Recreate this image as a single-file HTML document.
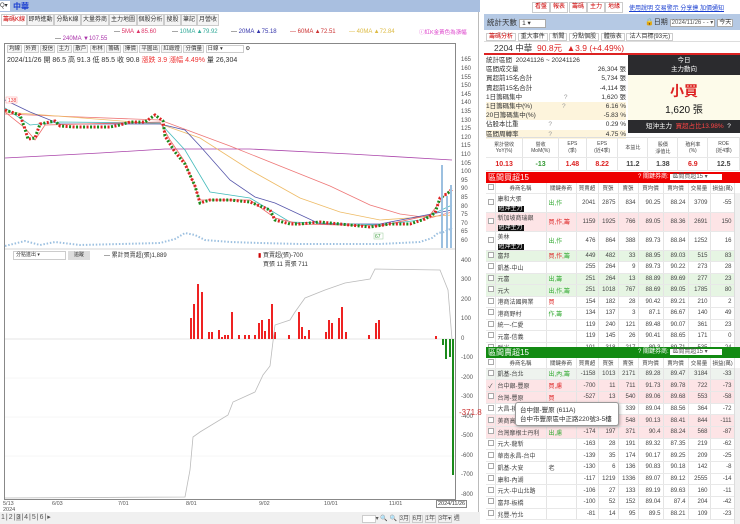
<!DOCTYPE html>
<html><head><meta charset="utf-8">
<style>
*{margin:0;padding:0;box-sizing:border-box}
body{width:740px;height:524px;overflow:hidden;background:#fff;font-family:"Liberation Sans","Noto Sans CJK TC",sans-serif;font-size:7px;color:#333;position:relative}
.a{position:absolute}
.tab{position:absolute;top:14px;height:12px;border:1px solid #ccc;background:#f4f4f4;font-size:6px;line-height:10px;text-align:center;color:#333;overflow:hidden;white-space:nowrap}
.btn{position:absolute;top:2px;height:11px;border:1px solid #ccc;background:#fff;color:#c00;font-size:6px;line-height:9px;padding:0 2px}
.ax{position:absolute;left:461px;font-size:6px;color:#555}
table{border-collapse:collapse;font-size:6px}
td{border-right:1px solid #e4e4e4;border-bottom:1px solid #e8e8e8;padding:0 2px;text-align:right;white-space:nowrap;overflow:hidden;color:#444}
td.n{text-align:left}
td.c{text-align:center}
.bl{background:#111;color:#fff;padding:0 1px;font-size:6px}
.pk{background:#fde4e6}.gr{background:#e6f5e3}.gy{background:#eef3ee}
.cb{display:inline-block;width:6px;height:6px;border:1px solid #aaa;background:#fff}
.tb{border:1px solid #ccc;background:#f5f5f5;padding:0 1px}
</style></head><body>
<div class="a" style="left:0;top:0;width:480px;height:12px;background:#a9bfe0"></div>
<div class="a" style="left:0;top:1px;width:10px;height:10px;background:#fff;font-size:6px;line-height:10px">Q▾</div>
<div class="a" style="left:13px;top:1px;color:#1a3fd0;font-size:8px;font-weight:bold">中華</div>
<div class="tab" style="left:1px;width:26px;color:#c00;background:#fff">籌碼K線</div>
<div class="tab" style="left:27px;width:27px">即時進動</div>
<div class="tab" style="left:54px;width:27px">分點K線</div>
<div class="tab" style="left:81px;width:28px">大量券商</div>
<div class="tab" style="left:109px;width:28px">主力地圖</div>
<div class="tab" style="left:137px;width:27px">個股分析</div>
<div class="tab" style="left:164px;width:17px">搜股</div>
<div class="tab" style="left:181px;width:16px">筆記</div>
<div class="tab" style="left:197px;width:22px">月營收</div>
<div class="a" style="top:29px;left:114px;font-size:6px;white-space:nowrap">— <span style="color:#d36">5MA ▲85.60</span></div>
<div class="a" style="top:29px;left:172px;font-size:6px;white-space:nowrap">— <span style="color:#3a9">10MA ▲79.92</span></div>
<div class="a" style="top:29px;left:231px;font-size:6px;white-space:nowrap">— <span style="color:#33a">20MA ▲75.18</span></div>
<div class="a" style="top:29px;left:290px;font-size:6px;white-space:nowrap"><span style="color:#c33">— 60MA ▲72.51</span></div>
<div class="a" style="top:29px;left:349px;font-size:6px;white-space:nowrap"><span style="color:#db4">— 40MA ▲72.84</span></div>
<div class="a" style="top:28px;left:419px;font-size:5.5px;color:#d4c;white-space:nowrap">ⓘ紅K金黃色為漲幅</div>
<div class="a" style="top:36px;left:55px;font-size:6px;white-space:nowrap">— <span style="color:#a3a">240MA ▼107.55</span></div>
<div class="a" style="left:4px;top:43px;width:452px;height:457px;border:1px solid #888"></div>
<div class="a" style="left:478px;top:12px;width:1px;height:500px;background:#bbb"></div>
<div class="a" style="left:7px;top:44px;font-size:5.5px;white-space:nowrap">
<span class="tb">均線</span> <span class="tb">外資</span> <span class="tb">投信</span> <span class="tb">主力</span> <span class="tb">散戶</span> <span class="tb">布林</span> <span class="tb">籌碼</span> <span class="tb">擇價</span> <span class="tb">平圖出</span> <span class="tb">紅綠燈</span> <span class="tb">分價量</span> <span style="border:1px solid #ccc;padding:0 20px 0 1px">日線 ▾</span> ⚙</div>
<div class="a" style="left:7px;top:55px;font-size:7px;color:#333;white-space:nowrap">2024/11/26 開 86.5 高 91.3 低 85.5 收 90.8 <span style="color:#e33">漲跌 3.9 漲幅 4.49%</span> 量 26,304</div>
<div class="ax" style="top:57px">165</div><div class="ax" style="top:66px">160</div><div class="ax" style="top:75px">155</div><div class="ax" style="top:83px">150</div><div class="ax" style="top:92px">145</div><div class="ax" style="top:100px">140</div><div class="ax" style="top:109px">135</div><div class="ax" style="top:118px">130</div><div class="ax" style="top:126px">125</div><div class="ax" style="top:135px">120</div><div class="ax" style="top:143px">115</div><div class="ax" style="top:152px">110</div><div class="ax" style="top:161px">105</div><div class="ax" style="top:169px">100</div><div class="ax" style="top:178px">95</div><div class="ax" style="top:186px">90</div><div class="ax" style="top:195px">85</div><div class="ax" style="top:204px">80</div><div class="ax" style="top:212px">75</div><div class="ax" style="top:221px">70</div><div class="ax" style="top:229px">65</div><div class="ax" style="top:238px">60</div>
<div class="ax" style="top:258px">400</div><div class="ax" style="top:277px">300</div><div class="ax" style="top:297px">200</div><div class="ax" style="top:316px">100</div><div class="ax" style="top:336px">0</div><div class="ax" style="top:355px">-100</div><div class="ax" style="top:375px">-200</div><div class="ax" style="top:394px">-300</div><div class="ax" style="top:414px">-400</div><div class="ax" style="top:433px">-500</div><div class="ax" style="top:453px">-600</div><div class="ax" style="top:472px">-700</div><div class="ax" style="top:492px">-800</div>
<div class="a" style="left:459px;top:408px;color:#c33;font-size:8px">-371.8</div>
<svg class="a" style="left:0;top:0" width="480" height="512">
<g fill="none" stroke-width="0.8">
<polyline stroke="#a4a" points="5,158 100,153 165,149 250,149 350,154 452,160"/>
<polyline stroke="#e77" points="5,114 80,117 160,120 230,146 280,166 330,186 370,205 400,214 430,218 452,212"/>
<polyline stroke="#eb6" points="5,112 160,124 200,138 250,170 300,198 340,212 380,220 452,215"/>
<polyline stroke="#55a" points="5,100 30,112 60,124 160,124 185,130 200,146 230,180 255,197 275,203 320,224 380,224 452,210"/>
<polyline stroke="#4bb" points="5,108 30,125 60,122 160,123 185,150 210,192 250,198 290,222 380,225 420,220 452,205"/>
<polyline stroke="#e66" points="5,112 25,128 35,140 45,125 160,122 170,140 185,162 200,200 210,200 250,200 275,218 300,224 380,226 430,215 445,195 452,188"/>
</g>
<g fill="none" stroke-width="3">
<polyline stroke="#d22" stroke-dasharray="2 5" points="5,110 20,115 25,129 28,139 35,138 40,124 55,121 60,126 75,127 90,127 110,127 120,125 130,122 145,122 155,115 163,121 165,136 175,152 185,164 195,186 200,203 210,200 230,200 250,202 270,210 275,220 290,224 300,224 320,222 340,224 370,227 390,224 410,224 425,219 435,213 440,198 448,193 452,189"/>
<polyline stroke="#1a8a1a" stroke-dashoffset="3.5" stroke-dasharray="2 5" points="5,110 20,115 25,129 28,139 35,138 40,124 55,121 60,126 75,127 90,127 110,127 120,125 130,122 145,122 155,115 163,121 165,136 175,152 185,164 195,186 200,203 210,200 230,200 250,202 270,210 275,220 290,224 300,224 320,222 340,224 370,227 390,224 410,224 425,219 435,213 440,198 448,193 452,189"/>
<polyline stroke="#9cc0e0" stroke-width="2" stroke-dasharray="1.5 1.8" points="5,246 25,241 40,245 55,242 80,245 120,244 160,243 175,239 185,233 195,235 205,240 230,242 260,243 300,244 340,244 380,244 420,242 432,238 438,233 444,232 452,228"/>
</g>
<rect x="441" y="165" width="2" height="83" fill="#9cc0e0"/><rect x="446" y="196" width="2" height="52" fill="#9cc0e0"/><rect x="450" y="185" width="2" height="63" fill="#9cc0e0"/>
<rect x="6" y="97" width="11" height="6" fill="#fff" stroke="#f99" stroke-width=".5"/><text x="8" y="102" font-size="5" fill="#e33">138</text>
<rect x="374" y="233" width="9" height="6" fill="#fff" stroke="#9c9" stroke-width=".5"/><text x="375" y="238" font-size="5" fill="#393">67</text>
<line x1="5" y1="249" x2="455" y2="249" stroke="#aaa" stroke-width=".5"/>
<line x1="5" y1="339" x2="455" y2="339" stroke="#ccc" stroke-width=".5"/>
<g stroke="#eee" stroke-width=".5"><line x1="5" y1="417" x2="455" y2="417"/><line x1="5" y1="456" x2="455" y2="456"/><line x1="5" y1="378" x2="455" y2="378"/></g>
<g fill="#e22">
<rect x="190" y="318" width="2" height="21"/><rect x="193" y="304" width="2" height="35"/><rect x="197" y="284" width="2" height="55"/><rect x="201" y="292" width="2" height="47"/><rect x="208" y="332" width="2" height="7"/><rect x="211" y="332" width="2" height="7"/><rect x="218" y="330" width="2" height="9"/><rect x="221" y="337" width="2" height="2"/><rect x="224" y="335" width="2" height="4"/><rect x="227" y="335" width="2" height="4"/><rect x="231" y="312" width="2" height="27"/><rect x="238" y="335" width="2" height="4"/><rect x="244" y="335" width="2" height="4"/><rect x="248" y="335" width="2" height="4"/><rect x="254" y="335" width="2" height="4"/><rect x="258" y="323" width="2" height="16"/><rect x="261" y="320" width="2" height="19"/><rect x="264" y="331" width="2" height="8"/><rect x="268" y="319" width="2" height="20"/><rect x="271" y="304" width="2" height="35"/><rect x="274" y="332" width="2" height="7"/><rect x="288" y="335" width="2" height="4"/><rect x="298" y="312" width="2" height="27"/><rect x="301" y="327" width="2" height="12"/><rect x="304" y="336" width="2" height="3"/><rect x="308" y="330" width="2" height="9"/><rect x="325" y="332" width="2" height="7"/><rect x="328" y="320" width="2" height="19"/><rect x="331" y="323" width="2" height="16"/><rect x="338" y="318" width="2" height="21"/><rect x="341" y="307" width="2" height="32"/><rect x="345" y="332" width="2" height="7"/><rect x="368" y="335" width="2" height="4"/><rect x="375" y="323" width="2" height="16"/><rect x="378" y="320" width="2" height="19"/><rect x="435" y="336" width="2" height="3"/></g>
<g fill="#1a8a1a"><rect x="442" y="339" width="2" height="6"/><rect x="445" y="339" width="2" height="20"/><rect x="449" y="339" width="2" height="18"/><rect x="452" y="339" width="2" height="136"/></g>
<polyline fill="none" stroke="#bbb" stroke-width=".8" points="5,498 185,497 190,470 193,437 200,432 228,415 233,402 255,392 263,375 270,366 275,325 290,320 295,312 305,298 325,290 345,283 370,279 375,269 440,270 448,290 452,339"/>
</svg>
<div class="a" style="left:13px;top:251px;width:53px;height:9px;border:1px solid #ccc;font-size:5px;line-height:7px;padding-left:2px">分點進出 ▾</div>
<div class="a" style="left:68px;top:251px;width:22px;height:9px;background:#ddd;font-size:5px;line-height:9px;text-align:center">追蹤</div>
<div class="a" style="left:104px;top:250px;font-size:6px;white-space:nowrap">— 累計買賣超(張)1,889</div>
<div class="a" style="left:258px;top:250px;font-size:6px;white-space:nowrap"><span style="color:#c00">▮</span> 買賣超(張)-700<br>&nbsp;&nbsp; 買張 11 賣張 711</div>
<div class="a" style="top:501px;left:3px;font-size:5.5px;color:#555;line-height:6px">5/13<br>2024</div>
<div class="a" style="top:501px;left:52px;font-size:5.5px;color:#555">6/03</div>
<div class="a" style="top:501px;left:118px;font-size:5.5px;color:#555">7/01</div>
<div class="a" style="top:501px;left:186px;font-size:5.5px;color:#555">8/01</div>
<div class="a" style="top:501px;left:259px;font-size:5.5px;color:#555">9/02</div>
<div class="a" style="top:501px;left:324px;font-size:5.5px;color:#555">10/01</div>
<div class="a" style="top:501px;left:389px;font-size:5.5px;color:#555">11/01</div>
<div class="a" style="top:500px;left:436px;font-size:5.5px;border:1px solid #888;padding:0 1px">2024/11/26</div>
<div class="a" style="left:0;top:512px;width:480px;height:12px;background:#f0f0f0"></div>
<div class="a" style="left:1px;top:513px;font-size:7px;color:#555;letter-spacing:1px">1|2|<span style="background:#ccc">3</span>|4|5|6|▸</div>
<div class="a" style="left:362px;top:513px;font-size:6px;color:#555;white-space:nowrap"><span style="border:1px solid #ccc;padding:0 5px;background:#fff">&nbsp;</span>▾ 🔍 🔍 <span style="border:1px solid #ccc">3月</span> <span style="border:1px solid #ccc">6月</span> <span style="border:1px solid #ccc">1年</span> <span style="border:1px solid #ccc">3年▾</span> 週</div>

<div class="btn" style="left:532px">看盤</div><div class="btn" style="left:550px">報表</div><div class="btn" style="left:569px">籌碼</div><div class="btn" style="left:587px">主力</div><div class="btn" style="left:605px">地緣</div>
<div class="a" style="left:629px;top:3px;font-size:6px;color:#1a3fd0;text-decoration:underline;white-space:nowrap">使用說明 交易警示 分享連 加價通知</div>
<div class="a" style="left:484px;top:14px;width:256px;height:16px;background:#b5c9e4"></div>
<div class="a" style="left:487px;top:17px;font-size:7.5px;white-space:nowrap">統計天數 <span style="background:#fff;border:1px solid #aaa;padding:0 14px 0 2px;font-size:6.5px">1 ▾</span></div>
<div class="a" style="left:645px;top:17px;font-size:7px;white-space:nowrap">🔒日期 <span style="background:#fff;border:1px solid #aaa;padding:0 1px;font-size:6px;color:#555">2024/11/26 ‑ ‑ ▾</span> <span style="background:#fff;border:1px solid #aaa;padding:0 1px;font-size:6px">今天</span></div>
<div class="a" style="left:486px;top:31px;font-size:6px;white-space:nowrap;color:#333"><span style="color:#c00;border:1px solid #ccc;padding:0 2px">籌碼分析</span> <span style="border:1px solid #ccc;padding:0 2px">重大事件</span> <span style="border:1px solid #ccc;padding:0 2px">新聞</span> <span style="border:1px solid #ccc;padding:0 2px">分點個股</span> <span style="border:1px solid #ccc;padding:0 2px">體檢表</span> <span style="border:1px solid #ccc;padding:0 2px">法人目標(93元)</span></div>
<div class="a" style="left:484px;top:41px;width:256px;height:14px;border-bottom:2px solid #d22;border-top:1px solid #ddd"></div>
<div class="a" style="left:494px;top:42px;font-size:8.5px;white-space:nowrap">2204 中華 &nbsp;<span style="color:#d22">90.8元 &nbsp;▲3.9 (+4.49%)</span></div>
<div class="a" style="left:486px;top:56px;width:140px;font-size:6.5px;line-height:9.2px">
<div>統計區間 &nbsp;20241126 ~ 20241126</div>
<div>區間成交量<span style="float:right">26,304 張</span></div>
<div>買超前15名合計<span style="float:right">5,734 張</span></div>
<div>賣超前15名合計<span style="float:right">-4,114 張</span></div>
<div>1日籌碼集中 <span style="margin-left:40px;color:#999">?</span><span style="float:right">1,620 張</span></div>
<div style="background:#fdf4dc">1日籌碼集中(%) <span style="margin-left:28px;color:#999">?</span><span style="float:right">6.16 %</span></div>
<div style="background:#fdf4dc">20日籌碼集中(%)<span style="float:right">-5.83 %</span></div>
<div>佔股本比重 <span style="margin-left:28px;color:#999">?</span><span style="float:right">0.29 %</span></div>
<div style="background:#fdf4dc">區間周轉率 <span style="margin-left:28px;color:#999">?</span><span style="float:right">4.75 %</span></div>
</div>
<div class="a" style="left:628px;top:55px;width:112px;height:20px;background:#2b2b2e;color:#fff;font-size:6.5px;text-align:center;line-height:9px;padding-top:1px">今日<br>主力動向</div>
<div class="a" style="left:628px;top:75px;width:112px;height:45px;background:#fdfbea;text-align:center"><div style="color:#d22;font-size:14px;font-weight:bold;margin-top:6px">小買</div><div style="font-size:10px;color:#111">1,620 張</div></div>
<div class="a" style="left:628px;top:120px;width:112px;height:13px;background:#2b2b2e;color:#fff;font-size:6.5px;line-height:13px;padding-left:18px;white-space:nowrap">短沖主力 &nbsp;<span style="color:#f44">買超占比13.98%</span> &nbsp;?</div>
<div class="a" style="left:486px;top:137px;width:254px;height:34px">
<table style="width:254px;height:34px;border-top:1px solid #ddd"><tr style="height:20px;color:#555"><td class="c" style="font-size:5px">累計營收<br>YoY(%)</td><td class="c" style="font-size:5px">營收<br>MoM(%)</td><td class="c" style="font-size:5px">EPS<br>(季)</td><td class="c" style="font-size:5px">EPS<br>(近4季)</td><td class="c" style="font-size:5px">本益比</td><td class="c" style="font-size:5px">股價<br>淨值比</td><td class="c" style="font-size:5px">殖利率<br>(%)</td><td class="c" style="font-size:5px">ROE<br>(近4季)</td></tr>
<tr style="font-size:7px;font-weight:bold"><td class="c" style="color:#d22">10.13</td><td class="c" style="color:#393">-13</td><td class="c" style="color:#d22">1.48</td><td class="c" style="color:#d22">8.22</td><td class="c">11.2</td><td class="c">1.38</td><td class="c" style="color:#d22">6.9</td><td class="c">12.5</td></tr></table></div>
<div class="a" style="left:486px;top:172px;width:254px;height:11px;background:#e00;color:#fff;font-size:8px;line-height:11px;padding-left:2px">區間買超15<span style="position:absolute;left:152px;top:0;font-size:6px">? 關鍵券商: <span style="background:#fff;color:#555;padding:0 14px 0 2px">區間買超15 ▾</span></span></div>
<div class="a" style="left:486px;top:183px;width:248px">
<table style="width:248px;table-layout:fixed">
<colgroup><col style="width:9px"><col style="width:51px"><col style="width:30px"><col style="width:22px"><col style="width:20px"><col style="width:20px"><col style="width:25px"><col style="width:25px"><col style="width:22px"><col style="width:24px"></colgroup>
<tr style="height:10px;font-size:5.5px"><td><span class="cb"></span></td><td class="c">券商名稱</td><td class="c">關鍵券商</td><td class="c">買賣超</td><td class="c">買張</td><td class="c">賣張</td><td class="c">買均價</td><td class="c">賣均價</td><td class="c">交易量</td><td class="c">損益(萬)</td></tr>
<tr style="height:18px"><td><span class="cb"></span></td><td class="n">康和大張<br><span class="bl">短沖主力</span></td><td class="n" style="color:#3a3">出,作</td><td>2041</td><td>2875</td><td>834</td><td>90.25</td><td>88.24</td><td>3709</td><td>-55</td></tr>
<tr style="height:18px" class="pk"><td><span class="cb"></span></td><td class="n">新加坡商瑞銀<br><span class="bl">短沖主力</span></td><td class="n" style="color:#d22">買,作,籌</td><td>1159</td><td>1925</td><td>766</td><td>89.05</td><td>88.36</td><td>2691</td><td>150</td></tr>
<tr style="height:18px"><td><span class="cb"></span></td><td class="n">美林<br><span class="bl">短沖主力</span></td><td class="n" style="color:#3a3">出,作</td><td>476</td><td>864</td><td>388</td><td>89.73</td><td>88.84</td><td>1252</td><td>16</td></tr>
<tr style="height:11.5px" class="gr"><td><span class="cb"></span></td><td class="n">富邦</td><td class="n" style="color:#d22">買,作,<span style="color:#3a3">籌</span></td><td>449</td><td>482</td><td>33</td><td>88.95</td><td>89.03</td><td>515</td><td>83</td></tr>
<tr style="height:11.5px"><td><span class="cb"></span></td><td class="n">凱基-中山</td><td></td><td>255</td><td>264</td><td>9</td><td>89.73</td><td>90.22</td><td>273</td><td>28</td></tr>
<tr style="height:11.5px" class="gr"><td><span class="cb"></span></td><td class="n">元富</td><td class="n" style="color:#3a3">出,籌</td><td>251</td><td>264</td><td>13</td><td>88.89</td><td>89.69</td><td>277</td><td>23</td></tr>
<tr style="height:11.5px" class="gr"><td><span class="cb"></span></td><td class="n">元大</td><td class="n" style="color:#3a3">出,作,籌</td><td>251</td><td>1018</td><td>767</td><td>88.69</td><td>89.05</td><td>1785</td><td>80</td></tr>
<tr style="height:11.5px"><td><span class="cb"></span></td><td class="n">港商法國興業</td><td class="n" style="color:#d22">買</td><td>154</td><td>182</td><td>28</td><td>90.42</td><td>89.21</td><td>210</td><td>2</td></tr>
<tr style="height:11.5px"><td><span class="cb"></span></td><td class="n">港商野村</td><td class="n" style="color:#3a3">作,籌</td><td>134</td><td>137</td><td>3</td><td>87.1</td><td>86.67</td><td>140</td><td>49</td></tr>
<tr style="height:11.5px"><td><span class="cb"></span></td><td class="n">統一-仁愛</td><td></td><td>119</td><td>240</td><td>121</td><td>89.48</td><td>90.07</td><td>361</td><td>23</td></tr>
<tr style="height:11.5px"><td><span class="cb"></span></td><td class="n">元富-信義</td><td></td><td>119</td><td>145</td><td>26</td><td>90.41</td><td>88.65</td><td>171</td><td>0</td></tr>
<tr style="height:11.5px"><td><span class="cb"></span></td><td class="n">群光</td><td></td><td>101</td><td>318</td><td>217</td><td>89.3</td><td>89.71</td><td>535</td><td>24</td></tr>
</table></div>
<div class="a" style="left:486px;top:347px;width:254px;height:11px;background:#128a12;color:#fff;font-size:8px;line-height:11px;padding-left:2px">區間賣超15<span style="position:absolute;left:152px;top:0;font-size:6px">? 關鍵券商: <span style="background:#fff;color:#555;padding:0 14px 0 2px">區間賣超15 ▾</span></span></div>
<div class="a" style="left:486px;top:358px;width:248px">
<table style="width:248px;table-layout:fixed">
<colgroup><col style="width:9px"><col style="width:51px"><col style="width:30px"><col style="width:22px"><col style="width:20px"><col style="width:20px"><col style="width:25px"><col style="width:25px"><col style="width:22px"><col style="width:24px"></colgroup>
<tr style="height:10px;font-size:5.5px"><td><span class="cb"></span></td><td class="c">券商名稱</td><td class="c">關鍵券商</td><td class="c">買賣超</td><td class="c">買張</td><td class="c">賣張</td><td class="c">買均價</td><td class="c">賣均價</td><td class="c">交易量</td><td class="c">損益(萬)</td></tr>
<tr style="height:11.7px" class="gy"><td><span class="cb"></span></td><td class="n">凱基-台北</td><td class="n" style="color:#3a3">出,內,籌</td><td>-1158</td><td>1013</td><td>2171</td><td>89.28</td><td>89.47</td><td>3184</td><td>-33</td></tr>
<tr style="height:11.7px" class="pk"><td>✓</td><td class="n">台中銀-豐原</td><td class="n" style="color:#d22">買,慮</td><td>-700</td><td>11</td><td>711</td><td>91.73</td><td>89.78</td><td>722</td><td>-73</td></tr>
<tr style="height:11.7px" class="pk"><td><span class="cb"></span></td><td class="n">台灣-豐原</td><td class="n" style="color:#d22">買</td><td>-527</td><td>13</td><td>540</td><td>89.06</td><td>89.68</td><td>553</td><td>-58</td></tr>
<tr style="height:11.7px"><td><span class="cb"></span></td><td class="n">大昌-桃園</td><td></td><td>-314</td><td>25</td><td>339</td><td>89.04</td><td>88.56</td><td>364</td><td>-72</td></tr>
<tr style="height:11.7px" class="pk"><td><span class="cb"></span></td><td class="n">美商高盛</td><td></td><td>-252</td><td>296</td><td>548</td><td>90.13</td><td>88.41</td><td>844</td><td>-111</td></tr>
<tr style="height:11.7px" class="pk"><td><span class="cb"></span></td><td class="n">台灣摩根士丹利</td><td class="n" style="color:#3a3">出,慮</td><td>-174</td><td>197</td><td>371</td><td>90.4</td><td>88.24</td><td>568</td><td>-87</td></tr>
<tr style="height:11.7px"><td><span class="cb"></span></td><td class="n">元大-龍新</td><td></td><td>-163</td><td>28</td><td>191</td><td>89.32</td><td>87.35</td><td>219</td><td>-62</td></tr>
<tr style="height:11.7px"><td><span class="cb"></span></td><td class="n">華南永昌-台中</td><td></td><td>-139</td><td>35</td><td>174</td><td>90.17</td><td>89.25</td><td>209</td><td>-25</td></tr>
<tr style="height:11.7px"><td><span class="cb"></span></td><td class="n">凱基-大安</td><td class="n">老</td><td>-130</td><td>6</td><td>136</td><td>90.83</td><td>90.18</td><td>142</td><td>-8</td></tr>
<tr style="height:11.7px"><td><span class="cb"></span></td><td class="n">康和-內湖</td><td></td><td>-117</td><td>1219</td><td>1336</td><td>89.07</td><td>89.12</td><td>2555</td><td>-14</td></tr>
<tr style="height:11.7px"><td><span class="cb"></span></td><td class="n">元大-中山北路</td><td></td><td>-106</td><td>27</td><td>133</td><td>89.19</td><td>89.63</td><td>160</td><td>-11</td></tr>
<tr style="height:11.7px"><td><span class="cb"></span></td><td class="n">富邦-板橋</td><td></td><td>-100</td><td>52</td><td>152</td><td>89.04</td><td>87.4</td><td>204</td><td>-42</td></tr>
<tr style="height:11.7px"><td><span class="cb"></span></td><td class="n">兆豐-竹北</td><td></td><td>-81</td><td>14</td><td>95</td><td>89.5</td><td>88.21</td><td>109</td><td>-23</td></tr>
</table></div>
<div class="a" style="left:734px;top:193px;width:6px;height:154px;background:#f0f0f0;border-left:1px solid #ddd"></div>
<div class="a" style="left:734px;top:368px;width:6px;height:156px;background:#f0f0f0;border-left:1px solid #ddd"></div>
<div class="a" style="left:515px;top:402px;width:104px;height:24px;background:#fff;border:1px solid #999;border-radius:3px;box-shadow:1px 1px 3px rgba(0,0,0,.3);font-size:6.5px;line-height:9px;padding:3px 4px;white-space:nowrap;color:#333">台中銀-豐原 (611A)<br>台中市豐原區中正路220號3-5樓</div>
</body></html>
